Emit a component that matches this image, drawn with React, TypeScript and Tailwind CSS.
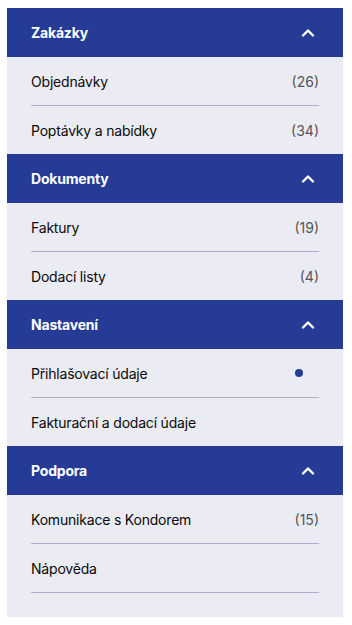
import React from "react";

type Item = { label: string; count?: number; dot?: boolean };
type Section = { title: string; items: Item[] };

const sections: Section[] = [
  {
    title: "Zakázky",
    items: [
      { label: "Objednávky", count: 26 },
      { label: "Poptávky a nabídky", count: 34 },
    ],
  },
  {
    title: "Dokumenty",
    items: [
      { label: "Faktury", count: 19 },
      { label: "Dodací listy", count: 4 },
    ],
  },
  {
    title: "Nastavení",
    items: [
      { label: "Přihlašovací údaje", dot: true },
      { label: "Fakturační a dodací údaje" },
    ],
  },
  {
    title: "Podpora",
    items: [
      { label: "Komunikace s Kondorem", count: 15 },
      { label: "Nápověda" },
    ],
  },
];

function ChevronUp() {
  return (
    <svg width="14" height="10" viewBox="0 0 14 10" fill="none">
      <polyline
        points="2,7.5 7,2.5 12,7.5"
        stroke="white"
        strokeWidth="2.4"
        strokeLinecap="round"
        strokeLinejoin="round"
      />
    </svg>
  );
}

export default function App() {
  return (
    <div className="w-[352px] h-[625px] bg-white pt-2 pl-[7px]" style={{ fontFamily: "Inter, 'Noto Sans', sans-serif" }}>
      <div className="w-[336px] bg-[#ebebf3] pb-6">
        {sections.map((s, si) => (
          <div key={s.title}>
            <div className="h-[49px] bg-[#253b96] flex items-center justify-between pl-6 pr-7">
              <span className="text-white font-bold text-[14px] tracking-[-0.2px]">{s.title}</span>
              <ChevronUp />
            </div>
            <div className="px-6">
              {s.items.map((it, ii) => {
                const last = ii === s.items.length - 1;
                const showBorder = !last || si === sections.length - 1;
                return (
                  <div
                    key={it.label}
                    className={`flex items-center justify-between ${
                      showBorder ? "h-[49px] border-b border-[#aeaed0]" : "h-[48px]"
                    }`}
                  >
                    <span className="text-[14px] text-[#0a0a0a] tracking-[-0.2px]">{it.label}</span>
                    {it.count !== undefined && (
                      <span className="text-[14px] text-[#555]">({it.count})</span>
                    )}
                    {it.dot && <span className="w-2 h-2 rounded-full bg-[#253b96] mr-4" />}
                  </div>
                );
              })}
            </div>
          </div>
        ))}
      </div>
    </div>
  );
}
